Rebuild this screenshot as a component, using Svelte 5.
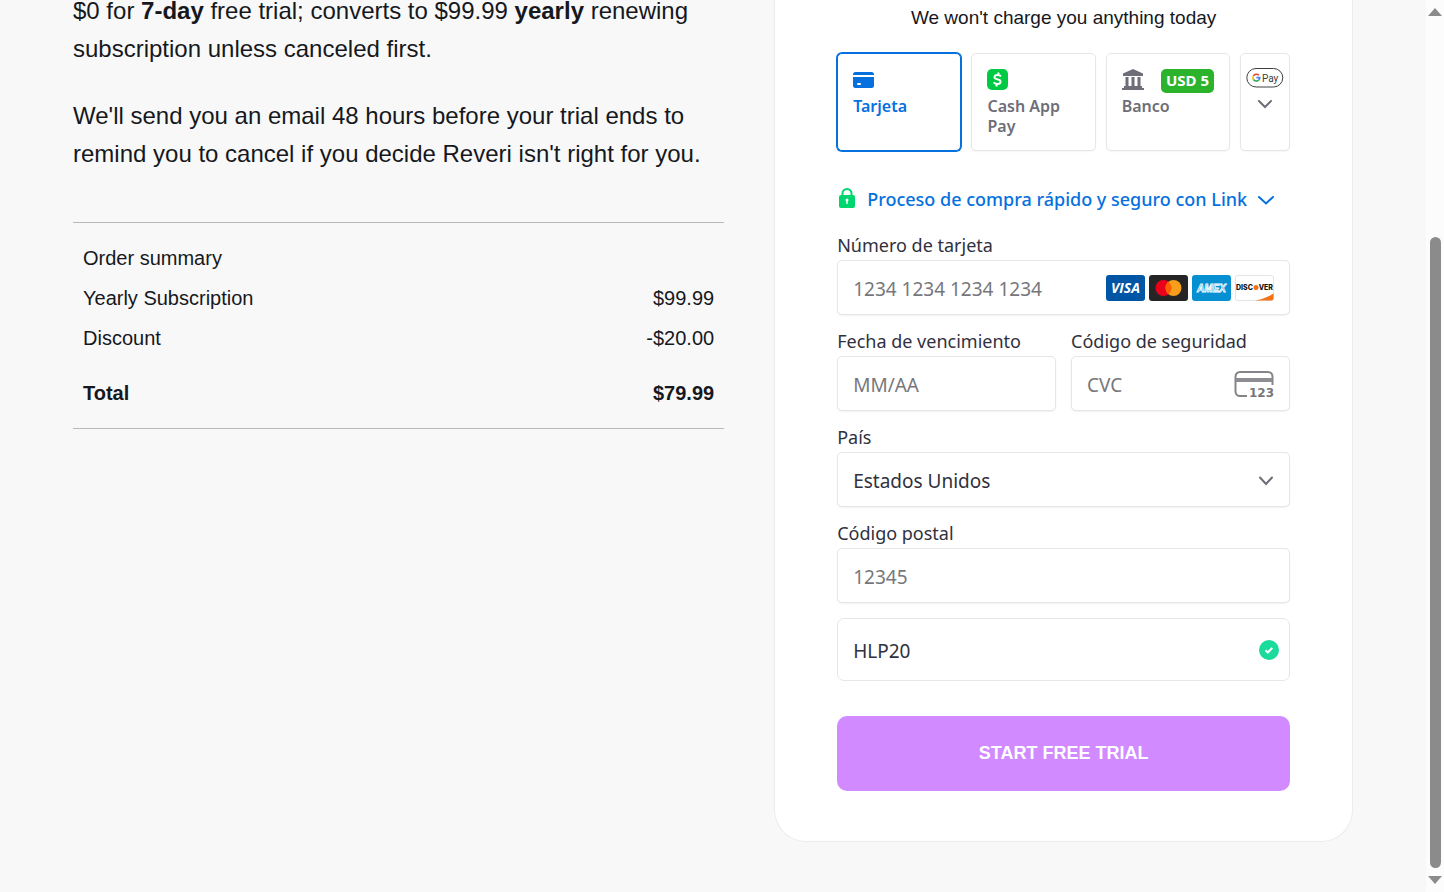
<script>
  let method = "card";
  let cardNumber = "";
  let expiry = "";
  let cvc = "";
  let country = "US";
  let zip = "";
  let coupon = "HLP20";

  const summary = [
    { label: "Yearly Subscription", amount: "$99.99" },
    { label: "Discount", amount: "-$20.00" },
  ];

  const countries = [
    { code: "US", name: "Estados Unidos" },
    { code: "MX", name: "México" },
    { code: "ES", name: "España" },
  ];

  function handleSubmit(event) {
    event.preventDefault();
  }
</script>

<div class="page">
  <main class="checkout">
    <section class="details">
      <p>
        $0 for <strong>7-day</strong> free trial; converts to $99.99 <strong>yearly</strong> renewing
        subscription unless canceled first.
      </p>
      <p>
        We'll send you an email 48 hours before your trial ends to
        remind you to cancel if you decide Reveri isn't right for you.
      </p>

      <table class="summary">
        <caption>Order summary</caption>
        <tbody>
          {#each summary as row (row.label)}
            <tr>
              <th scope="row">{row.label}</th>
              <td>{row.amount}</td>
            </tr>
          {/each}
        </tbody>
        <tfoot>
          <tr>
            <th scope="row">Total</th>
            <td>$79.99</td>
          </tr>
        </tfoot>
      </table>
    </section>

    <form class="card" on:submit={handleSubmit}>
      <p class="card__note">We won't charge you anything today</p>

      <div class="methods">
        <button type="button" class="method" class:method--active={method === "card"} on:click={() => (method = "card")}>
          <svg width="22" height="22" viewBox="0 0 22 22" aria-hidden="true">
            <path fill="currentColor" d="M2.500 3h16a2.500 2.500 0 0 1 2.500 2.500V6H0v-.5A2.500 2.500 0 0 1 2.500 3zM0 8h21v8.500a2.500 2.500 0 0 1-2.500 2.500h-16A2.500 2.500 0 0 1 0 16.500z" />
            <rect x="4" y="14" width="4" height="2" rx="1" fill="#fff" />
          </svg>
          <span>Tarjeta</span>
        </button>

        <button type="button" class="method" class:method--active={method === "cashapp"} on:click={() => (method = "cashapp")}>
          <svg width="22" height="22" viewBox="0 0 22 22" aria-hidden="true">
            <rect x="0" y="0" width="21" height="21" rx="5" fill="#00c943" />
            <g fill="none" stroke="#fff" stroke-width="2">
              <path d="M14 7.300C12.900 6.300 11.500 5.900 10.300 6c-3.500.3-3.700 3.400-.7 4.100l1.800.5c3.300.9 2.600 4.300-.8 4.400-1.400 0-2.900-.5-4-1.600" />
              <path d="M11.600 3.500l-.5 2.500M9.900 15l-.5 2.500" />
            </g>
          </svg>
          <span>Cash App Pay</span>
        </button>

        <button type="button" class="method" class:method--active={method === "bank"} on:click={() => (method = "bank")}>
          <span class="method__top">
            <svg width="22" height="22" viewBox="0 0 22 22" aria-hidden="true">
              <path fill="currentColor" d="M11 0L21 4.500V7H1V4.500zM3.500 8h3v9h-3zM9.500 8h3v9h-3zM15.500 8h3v9h-3zM2 17h18v2H2zM0 19h22v2H0z" />
            </svg>
            <span class="method__badge">USD 5</span>
          </span>
          <span>Banco</span>
        </button>

        <button type="button" class="method method--more" aria-label="Más métodos de pago">
          <svg width="38" height="22" viewBox="0 0 38 22" aria-hidden="true">
            <rect x=".8" y="1.500" width="36" height="18.500" rx="9.250" fill="#fff" stroke="#3c4043" />
            <g fill="none" stroke-width="1.600">
              <path stroke="#ea4335" d="M7.400 8.900A3.500 3.500 0 0 1 12.900 8.300" />
              <path stroke="#fbbc04" d="M7.400 8.900a3.500 3.500 0 0 0 0 3.600" />
              <path stroke="#34a853" d="M7.400 12.500a3.500 3.500 0 0 0 5.300.7" />
              <path stroke="#4285f4" d="M12.700 13.200a3.500 3.500 0 0 0 1.100-2.600h-3.400" />
            </g>
            <text x="16" y="14.500" font-family="Roboto, sans-serif" font-size="10" font-weight="400" fill="#3c4043">Pay</text>
          </svg>
          <svg width="16" height="10" viewBox="0 0 16 10" aria-hidden="true">
            <path d="M2 2l6 6 6-6" fill="none" stroke="currentColor" stroke-width="2" stroke-linecap="round" />
          </svg>
        </button>
      </div>

      <button type="button" class="link-toggle">
        <svg width="20" height="22" viewBox="0 0 20 22" aria-hidden="true">
          <path d="M5.500 10V5.500a4.500 4.500 0 0 1 9 0V10" fill="none" stroke="#00d66f" stroke-width="2" />
          <rect x="2" y="7" width="16" height="13" rx="2" fill="#00d66f" />
          <circle cx="10" cy="12" r="1.500" fill="#fff" />
          <path d="M9.300 12h1.400v4H9.300z" fill="#fff" />
        </svg>
        <span>Proceso de compra rápido y seguro con Link</span>
        <svg width="18" height="12" viewBox="0 0 18 12" aria-hidden="true">
          <path d="M2 4l7 6.500L16 4" fill="none" stroke="currentColor" stroke-width="2" stroke-linecap="round" />
        </svg>
      </button>

      <div class="fields">
        <div class="field field--wide">
          <label for="card-number">Número de tarjeta</label>
          <div class="control">
            <input id="card-number" type="text" placeholder="1234 1234 1234 1234" bind:value={cardNumber} />
            <span class="brands" aria-hidden="true">
              <svg width="39" height="26" viewBox="0 0 39 26">
                <rect width="39" height="26" rx="3" fill="#0055a4" />
                <text x="19.500" y="18" text-anchor="middle" font-family="Open Sans, sans-serif" font-size="14" font-weight="700" font-style="italic" fill="#fff">VISA</text>
              </svg>
              <svg width="39" height="26" viewBox="0 0 39 26">
                <rect width="39" height="26" rx="3" fill="#252525" />
                <circle cx="14.500" cy="13" r="8" fill="#eb001b" />
                <circle cx="24.500" cy="13" r="8" fill="#f79e1b" />
                <path d="M19.500 6.750a8 8 0 0 1 0 12.500 8 8 0 0 1 0-12.500z" fill="#ff5f00" />
              </svg>
              <svg width="39" height="26" viewBox="0 0 39 26">
                <rect width="39" height="26" rx="3" fill="#0690d2" />
                <text x="19.500" y="17" text-anchor="middle" font-family="Liberation Sans, sans-serif" font-size="10" font-weight="700" font-style="italic" fill="#0690d2" stroke="#fff" stroke-width=".8">AMEX</text>
              </svg>
              <svg width="39" height="26" viewBox="0 0 39 26">
                <rect x=".5" y=".5" width="38" height="25" rx="2.500" fill="#fff" stroke="#e3e3e8" />
                <path d="M20 25.500c8-1.500 14-4 18.500-7V23a2.500 2.500 0 0 1-2.500 2.500z" fill="#f47216" />
                <text x="1" y="15" font-family="Inter, sans-serif" font-size="7" font-weight="800" fill="#111">DISC</text>
                <circle cx="21" cy="12.500" r="2.500" fill="#f47216" />
                <text x="38" y="15" text-anchor="end" font-family="Inter, sans-serif" font-size="7" font-weight="800" fill="#111">VER</text>
              </svg>
            </span>
          </div>
        </div>

        <div class="field">
          <label for="expiry">Fecha de vencimiento</label>
          <div class="control">
            <input id="expiry" type="text" placeholder="MM/AA" bind:value={expiry} />
          </div>
        </div>

        <div class="field">
          <label for="cvc">Código de seguridad</label>
          <div class="control">
            <input id="cvc" type="text" placeholder="CVC" bind:value={cvc} />
            <svg width="40" height="28" viewBox="0 0 40 28" aria-hidden="true">
              <path d="M13 26H6a4.500 4.500 0 0 1-4.500-4.500v-15A4.500 4.500 0 0 1 6 2h28a4.500 4.500 0 0 1 4.500 4.500V15" fill="none" stroke="#858589" stroke-width="2" />
              <path d="M2 8h36v4H2z" fill="#8d8d91" />
              <text x="40" y="27" text-anchor="end" font-family="DejaVu Sans, sans-serif" font-size="12" font-weight="700" fill="#77777b">123</text>
            </svg>
          </div>
        </div>

        <div class="field field--wide">
          <label for="country">País</label>
          <div class="control">
            <select id="country" bind:value={country}>
              {#each countries as item (item.code)}
                <option value={item.code}>{item.name}</option>
              {/each}
            </select>
            <svg width="16" height="12" viewBox="0 0 16 12" aria-hidden="true">
              <path d="M2 3.500l6 6.500 6-6.500" fill="none" stroke="#6d6e78" stroke-width="2" stroke-linecap="round" />
            </svg>
          </div>
        </div>

        <div class="field field--wide">
          <label for="zip">Código postal</label>
          <div class="control">
            <input id="zip" type="text" placeholder="12345" bind:value={zip} />
          </div>
        </div>

        <div class="field field--wide">
          <div class="control control--coupon">
            <input type="text" aria-label="Coupon code" bind:value={coupon} />
            <svg width="20" height="20" viewBox="0 0 20 20" aria-hidden="true">
              <circle cx="10" cy="10" r="10" fill="#1adb9b" />
              <path d="M6.500 10.200l2.300 2.300 4.500-4.600" fill="none" stroke="#fff" stroke-width="2" />
            </svg>
          </div>
        </div>
      </div>

      <button type="submit" class="submit">START FREE TRIAL</button>
    </form>
  </main>

  <div class="scrollbar" aria-hidden="true">
    <svg width="14" height="8" viewBox="0 0 14 8"><path d="M0 8l7-8 7 8z" fill="#8b8b8b" /></svg>
    <span class="scrollbar__thumb"></span>
    <svg width="14" height="8" viewBox="0 0 14 8"><path d="M0 0h14L7 8z" fill="#8b8b8b" /></svg>
  </div>
</div>

<style>
  :global(body) {
    margin: 0;
    background: #f8f8f8;
  }

  .page {
    display: flex;
    min-height: 100vh;
    font-family: "Liberation Sans", Arial, sans-serif;
    color: #16181d;
  }

  .page * {
    box-sizing: border-box;
  }

  .checkout {
    flex: 1;
    display: grid;
    grid-template-columns: minmax(0, 9fr) minmax(0, 8fr);
    gap: 50px;
    align-items: start;
    max-width: 1280px;
    margin: 0 auto;
    padding-bottom: 50px;
  }

  .details {
    margin-top: -8px;
  }

  .details p {
    margin: 0 0 29px;
    font-size: 24px;
    line-height: 38px;
  }

  .summary {
    display: flex;
    flex-direction: column;
    margin-top: 49px;
    padding: 15px 10px;
    border-top: 1px solid #b9b9b9;
    border-bottom: 1px solid #b9b9b9;
    font-size: 20px;
    line-height: 40px;
  }

  .summary caption {
    text-align: left;
  }

  .summary tr {
    display: flex;
    justify-content: space-between;
  }

  .summary th,
  .summary td {
    padding: 0;
    font-weight: 400;
  }

  .summary tfoot {
    margin-top: 15px;
  }

  .summary tfoot th,
  .summary tfoot td {
    font-weight: 700;
  }

  .card {
    padding: 8px 62px 50px;
    background: #fff;
    border: 1px solid #ececec;
    border-top: none;
    border-radius: 0 0 32px 32px;
  }

  .card__note {
    margin: 0 0 25px;
    font-size: 19px;
    line-height: 20px;
    text-align: center;
  }

  .card button {
    cursor: pointer;
  }

  .methods {
    display: grid;
    grid-template-columns: repeat(3, minmax(0, 1fr)) 50px;
    gap: 10px;
  }

  .method {
    display: flex;
    flex-direction: column;
    align-items: flex-start;
    height: 98px;
    padding: 15px;
    background: #fff;
    border: 1px solid #e6e6e6;
    border-radius: 5px;
    box-shadow: 0 1px 2px rgba(0, 0, 0, 0.04);
    font-family: "Noto Sans", sans-serif;
    font-size: 16px;
    font-weight: 600;
    line-height: 20px;
    text-align: left;
    color: #6d6e78;
  }

  .method > svg,
  .method__top {
    flex: none;
    margin-bottom: 5px;
  }

  .method--active {
    border-color: #0570de;
    box-shadow: 0 0 0 1px #0570de;
    color: #0570de;
  }

  .method__top {
    display: flex;
    justify-content: space-between;
    align-self: stretch;
    height: 22px;
  }

  .method__badge {
    height: 24px;
    padding: 0 5px;
    background: #2bb32b;
    border-radius: 5px;
    font-size: 15px;
    font-weight: 700;
    line-height: 22px;
    white-space: nowrap;
    color: #fff;
  }

  .method--more {
    align-items: center;
    padding: 13px 0;
  }

  .method--more > svg {
    margin-bottom: 10px;
  }

  .link-toggle {
    display: flex;
    align-items: center;
    gap: 10px;
    height: 28px;
    margin: 34px 0 21px;
    padding: 0;
    background: none;
    border: none;
    font-family: "Noto Sans", sans-serif;
    font-size: 18px;
    font-weight: 500;
    white-space: nowrap;
    color: #0570de;
  }

  .fields {
    display: grid;
    grid-template-columns: repeat(2, minmax(0, 1fr));
    gap: 15px;
    font-family: "Noto Sans", sans-serif;
    color: #30313d;
  }

  .field--wide {
    grid-column: 1 / -1;
  }

  .field label {
    display: block;
    margin-bottom: 4px;
    font-size: 18px;
    line-height: 22px;
  }

  .control {
    display: flex;
    align-items: center;
    height: 55px;
    padding: 0 15px;
    background: #fff;
    border: 1px solid #e6e6e6;
    border-radius: 5px;
    box-shadow: 0 1px 2px rgba(0, 0, 0, 0.06);
  }

  .control input,
  .control select {
    flex: 1;
    min-width: 0;
    height: 100%;
    padding: 2px 0 0;
    background: none;
    border: none;
    outline: none;
    appearance: none;
    font-family: inherit;
    font-size: 19px;
    color: inherit;
  }

  .control input::placeholder {
    color: #77777b;
    opacity: 1;
  }

  .control--coupon {
    height: 63px;
    padding-right: 10px;
    border-radius: 7px;
    box-shadow: none;
  }

  .brands {
    display: flex;
    gap: 4px;
  }

  .submit {
    width: 100%;
    height: 75px;
    margin-top: 35px;
    background: #d18aff;
    border: none;
    border-radius: 10px;
    font-family: inherit;
    font-size: 18px;
    font-weight: 700;
    color: #fff;
  }

  .scrollbar {
    position: sticky;
    top: 0;
    display: flex;
    flex: none;
    flex-direction: column;
    align-items: center;
    justify-content: space-between;
    width: 18px;
    height: 100vh;
    padding: 8px 0;
    background: #fcfcfc;
  }

  .scrollbar__thumb {
    width: 11px;
    height: 72%;
    margin: auto 0 8px;
    background: #8b8b8b;
    border-radius: 6px;
  }
</style>
